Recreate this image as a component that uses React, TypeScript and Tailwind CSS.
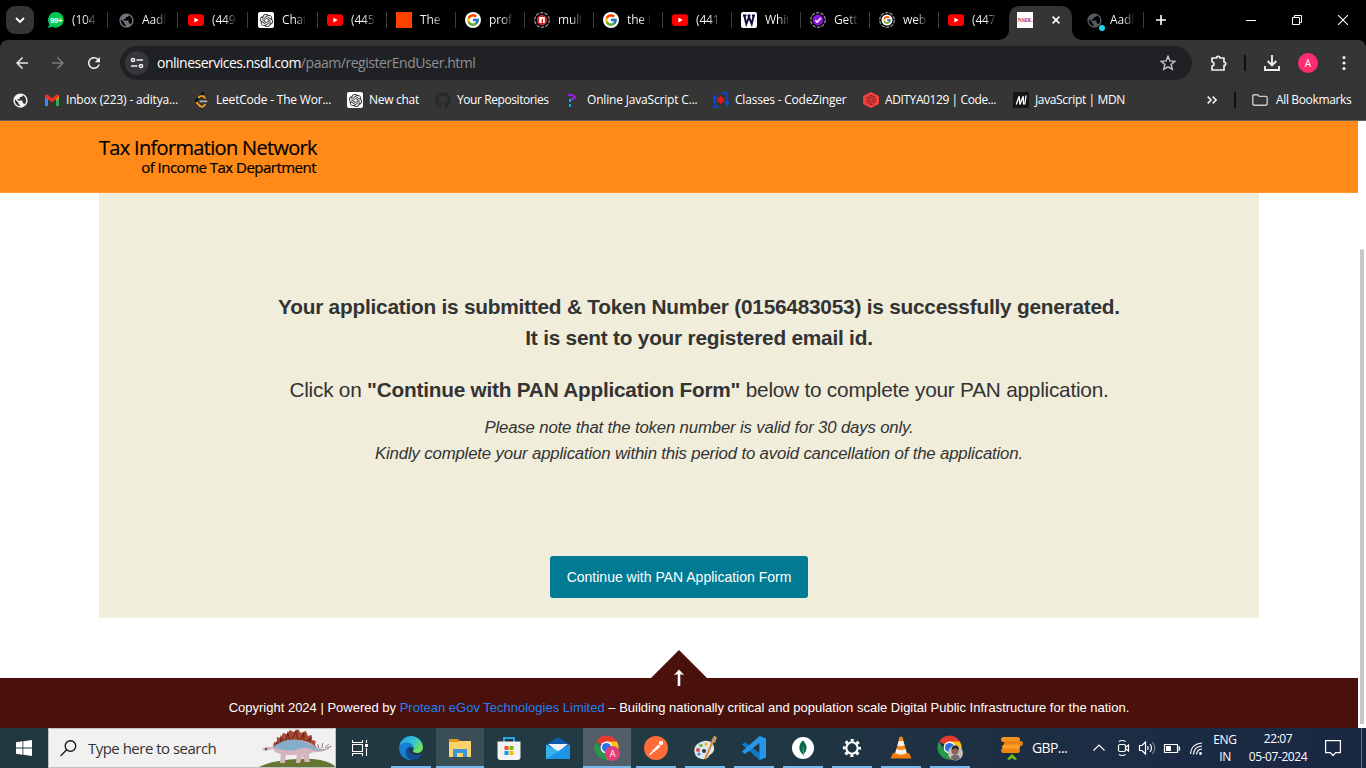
import type { ReactNode } from "react";
import { FcGoogle } from "react-icons/fc";
import { SiOpenai, SiMongodb } from "react-icons/si";
import { FaGithub } from "react-icons/fa";
import { MdPublic, MdArrowBack, MdArrowForward, MdRefresh } from "react-icons/md";

const YouTube = () => (
  <svg viewBox="0 0 16 16" className="size-4">
    <rect x="0" y="2.3" width="16" height="11.6" rx="2.8" fill="#f00" />
    <path d="M6.4 5.8 10.6 8.1 6.4 10.4z" fill="#fff" />
  </svg>
);

const OpenAi = () => (
  <span className="flex size-4 items-center justify-center rounded-[2px] bg-white">
    <SiOpenai size={13} color="#222" />
  </span>
);

const Globe = ({ color }: { color: string }) => <MdPublic size={17} color={color} className="-m-[0.5px] shrink-0" />;

const Ring = ({ children }: { children: ReactNode }) => (
  <svg viewBox="0 0 16 16" className="size-4">
    <circle cx="8" cy="8" r="7.3" fill="none" stroke="#8b8f94" strokeWidth="1.3" strokeDasharray="3.4 1.2" />
    {children}
  </svg>
);

const Whatsapp = () => (
  <svg viewBox="0 0 16 16" className="size-4">
    <path d="M8.2 0a7.8 7.8 0 1 1-3.7 14.8L0 16l1.3-4A7.8 7.8 0 0 1 8.2 0z" fill="#00c853" />
    <text x="8.2" y="11" textAnchor="middle" fontSize="8" letterSpacing="-0.4" fontWeight="700" fill="#fff" fontFamily="Liberation Sans, sans-serif">99+</text>
  </svg>
);

const GoogleSmall = () => (
  <span className="flex size-4 items-center justify-center rounded-full bg-white">
    <FcGoogle size={14} />
  </span>
);

const tabs: { icon: ReactNode; text: string }[] = [
  { icon: <Whatsapp />, text: "(104)" },
  { icon: <Globe color="#6f757b" />, text: "Aadhaar" },
  { icon: <YouTube />, text: "(449)" },
  { icon: <OpenAi />, text: "ChatGPT" },
  { icon: <YouTube />, text: "(445)" },
  { icon: <span className="block size-4 bg-[#ff4100]" />, text: "The" },
  { icon: <GoogleSmall />, text: "profile" },
  {
    icon: (
      <Ring>
        <circle cx="8" cy="8" r="5.3" fill="#cb2027" />
        <path d="M5.2 5h5.6v6H9V6.8H7.700V11H5.200z" fill="#fff" />
      </Ring>
    ),
    text: "multer",
  },
  { icon: <GoogleSmall />, text: "the f" },
  { icon: <YouTube />, text: "(441)" },
  {
    icon: (
      <svg viewBox="0 0 16 16" className="size-4">
        <rect width="16" height="16" rx="2" fill="#fff" />
        <path d="M2 3.500h3.400M6.500 3.500h3M11 3.500h3M3.400 4 5.300 12 8 5l2.700 7 1.900-8" fill="none" stroke="#100b40" strokeWidth="2" />
      </svg>
    ),
    text: "White",
  },
  {
    icon: (
      <Ring>
        <circle cx="8" cy="8" r="5.400" fill="#8418d8" />
        <path d="m5.300 8.200 1.900 1.900 3.600-4" fill="none" stroke="#fff" strokeWidth="1.500" />
      </Ring>
    ),
    text: "Getting",
  },
  {
    icon: (
      <Ring>
        <circle cx="8" cy="8" r="5.500" fill="#fff" />
        <FcGoogle x="3.500" y="3.500" size={9} />
      </Ring>
    ),
    text: "web d",
  },
  { icon: <YouTube />, text: "(447)" },
];

const Tab = ({ icon, text, last, wide }: { icon: ReactNode; text: string; last?: boolean; wide?: boolean }) => (
  <div className={`flex h-8 shrink-0 items-center ${wide ? "w-[70px]" : "w-[69px]"}`}>
    <span className="flex size-4 shrink-0 items-center justify-center">{icon}</span>
    <span className="ml-2 w-[23px] overflow-hidden whitespace-nowrap bg-[linear-gradient(90deg,#fff_13px,#0000_25px)] bg-clip-text text-xs tracking-[-0.15px] text-transparent">
      {text}
    </span>
    {!last && <span className="ml-[12px] h-4 w-px bg-[#3d3d3d]" />}
  </div>
);

const TabStrip = () => (
  <div className="flex h-10 bg-black">
    <div className="mt-[6px] ml-[6px] flex h-7 w-7 items-center justify-center rounded-[9px] bg-[#353535]">
      <svg width="10" height="7" viewBox="0 0 10 7">
        <path d="m1 1 4 4 4-4" fill="none" stroke="#fff" strokeWidth="1.800" />
      </svg>
    </div>
    <div className="mt-1 ml-[14px] flex w-[961px]">
      {tabs.map((t, i) => (
        <Tab key={i} icon={t.icon} text={t.text} wide={i < 3} last={i === tabs.length - 1} />
      ))}
    </div>
    <div className="relative mt-[6px] flex h-[34px] w-[63px] items-start rounded-t-[10px] bg-[#353535] pt-[6px] pl-2">
      <svg className="absolute bottom-0 -left-[10px]" width="10" height="10">
        <path d="M10 0v10H0A10 10 0 0 0 10 0z" fill="#353535" />
      </svg>
      <svg className="absolute -right-[10px] bottom-0" width="10" height="10">
        <path d="M0 0v10h10A10 10 0 0 1 0 0z" fill="#353535" />
      </svg>
      <span className="flex size-4 items-center justify-center bg-white pb-px font-['Liberation_Serif',serif] text-[6px] leading-none font-bold tracking-[-0.3px] text-[#c2283b]">NSDL</span>
      <svg className="mt-1 ml-[19px]" width="8" height="8" viewBox="0 0 8 8">
        <path d="m.6.6 6.800 6.800M7.400.6.6 7.400" stroke="#fff" strokeWidth="1.600" />
      </svg>
    </div>
    <div className="relative mt-1 ml-[14px] flex h-8">
      <Tab icon={<Globe color="#565c62" />} text="Aadhaar" last />
      <span className="absolute top-[21px] left-[13px] size-[6px] rounded-full bg-[#22d3ee]" />
    </div>
    <div className="-ml-[12px] mt-3 h-4 w-px bg-[#3d3d3d]" />
    <svg className="mt-[15px] ml-[12px]" width="10" height="10">
      <path d="M5 0v10M0 5h10" stroke="#fff" strokeWidth="1.600" />
    </svg>
    <div className="mt-[15px] flex pl-[80px]">
      <svg width="10" height="10">
        <path d="M0 5.500h10" stroke="#fff" />
      </svg>
      <svg className="ml-9" width="10" height="10">
        <path d="M.5 2.500h7v7h-7zM2.500 2.500v-2h7v7h-2" fill="none" stroke="#fff" />
      </svg>
      <svg className="ml-9" width="10" height="10">
        <path d="m0 0 10 10M10 0 0 10" stroke="#fff" strokeWidth="1.100" />
      </svg>
    </div>
  </div>
);

const Toolbar = () => (
  <div className="flex h-[46px] items-center rounded-t-[8px] bg-[#353535]">
    <MdArrowBack size={18} color="#e8e8e8" className="ml-[13px]" />
    <MdArrowForward size={18} color="#7c7c7c" className="ml-[18px]" />
    <MdRefresh size={18} color="#f1f1f1" className="ml-[18px]" />
    <div className="ml-[17px] flex h-[34px] w-[1072px] items-center rounded-full bg-[#202124]">
      <span className="ml-[5px] flex size-6 items-center justify-center rounded-full bg-[#353639]">
        <svg width="14" height="12" viewBox="0 0 14 12" fill="none" stroke="#f0f0f0" strokeWidth="1.500">
          <circle cx="3" cy="3" r="1.600" />
          <path d="M6.500 3H13M1 9h6.500" />
          <circle cx="11" cy="9" r="1.600" />
        </svg>
      </span>
      <span className="ml-2 flex-1 text-sm tracking-[-0.46px] text-[#8e9094]">
        <span className="tracking-[-0.5px] text-white">onlineservices.nsdl.com</span>/paam/registerEndUser.html
      </span>
      <svg className="mr-4" width="16" height="16" viewBox="0 0 16 16">
        <path d="m8 1.300 1.900 4.600 5 .4-3.800 3.200 1.200 4.900L8 11.800l-4.300 2.600 1.200-4.900L1.100 6.300l5-.4z" fill="none" stroke="#c7c7c7" strokeWidth="1.400" />
      </svg>
    </div>
    <svg className="ml-[18px]" width="18" height="18" viewBox="0 0 18 18">
      <path d="M2 4h4.500a1.700 1.700 0 0 1 3.400 0H14v4a1.700 1.700 0 0 1 0 3.400V16H2v-3.800c2.800-.6 2.800-3.800 0-4.400z" fill="none" stroke="#eee" strokeWidth="1.700" strokeLinejoin="round" />
    </svg>
    <span className="ml-4 h-4 w-[2px] bg-[#101010]" />
    <svg className="ml-[18px]" width="16" height="16" viewBox="0 0 16 16">
      <path d="M8 0v10M3.700 6 8 10.300 12.300 6M1 11v4h14v-4" fill="none" stroke="#eee" strokeWidth="1.900" />
    </svg>
    <span className="ml-[18px] flex size-5 items-center justify-center rounded-full bg-[#ff2d6f] text-[10px] text-white">A</span>
    <svg className="ml-6" width="4" height="16">
      <circle cx="2" cy="2.500" r="1.600" fill="#eee" />
      <circle cx="2" cy="8" r="1.600" fill="#eee" />
      <circle cx="2" cy="13.500" r="1.600" fill="#eee" />
    </svg>
  </div>
);

const Gmail = () => (
  <svg viewBox="0 0 16 16" className="size-4">
    <path d="M1 4v10h3V7z" fill="#4285f4" />
    <path d="M15 4v10h-3V7z" fill="#34a853" />
    <path d="M12 3.400 15 3.800V6l-3 2.500z" fill="#fbbc04" />
    <path d="M1 3.800C1 2.500 2.500 2 3.600 2.800L8 6.200l4.400-3.400c1-.8 2.600-.3 2.600 1l-1 2L8 10.200 1 5.500z" fill="#ea3323" />
  </svg>
);

const LeetCode = () => (
  <svg viewBox="0 0 16 16" className="size-4" fill="none" strokeWidth="1.800" strokeLinecap="round">
    <path d="M9.200.9 2.700 7.500q-1.200 1.500 0 3" stroke="#050505" />
    <path d="M4.700 5.500 6 4.300q1.800-1 3.300 0l1.600 1.500M2.700 10.600l3.200 3.500q2 1.300 3.700 0l1.500-1.500" stroke="#f89f1b" />
    <path d="M6.300 9.300h6.300" stroke="#b3b3b3" />
  </svg>
);

const bookmarks: { icon: ReactNode; text: string; cls: string }[] = [
  { icon: <Gmail />, text: "Inbox (223) - aditya...", cls: "w-[112px] tracking-[-0.17px]" },
  { icon: <LeetCode />, text: "LeetCode - The Wor...", cls: "w-[115px] tracking-[-0.2px]" },
  { icon: <OpenAi />, text: "New chat", cls: "w-[50px] tracking-[-0.28px]" },
  { icon: <FaGithub size={16} color="#24292e" />, text: "Your Repositories", cls: "w-[92px] tracking-[-0.42px]" },
  {
    icon: (
      <svg viewBox="0 0 16 16" className="size-4" fill="none" strokeWidth="2">
        <path d="M3 3h4.500l2.500 2.500L6 8" stroke="#9b20e8" />
        <path d="M5 7v3M5 12v3" stroke="#19a3f5" />
      </svg>
    ),
    text: "Online JavaScript C...",
    cls: "w-[110px] tracking-[-0.18px]",
  },
  {
    icon: (
      <svg viewBox="0 0 16 16" className="size-4" fill="none">
        <path d="M6 15H1.800V5M0 7l1.800-3L3.600 7M9 1.200h5V12M12.200 10 14 13l1.800-3" stroke="#0c47d8" strokeWidth="1.700" />
        <path d="M7.800 4v8M4.300 6l7 4M11.300 6l-7 4" stroke="#f01818" strokeWidth="1.700" />
      </svg>
    ),
    text: "Classes - CodeZinger",
    cls: "w-[112px] tracking-[-0.2px]",
  },
  {
    icon: (
      <svg viewBox="0 0 16 16" className="size-4">
        <path d="m8 0 7 3.500c.6.300.9.700.9 1.300v6.400c0 .6-.3 1-.9 1.300L8 16l-7-3.500c-.6-.3-.9-.7-.9-1.300V4.800c0-.6.300-1 .9-1.300z" fill="#f5423f" />
        <SiOpenai x="3" y="3" size={10} color="#7e1d20" />
      </svg>
    ),
    text: "ADITYA0129 | Code...",
    cls: "w-[112px] tracking-[-0.41px]",
  },
  {
    icon: (
      <svg viewBox="0 0 16 16" className="size-4">
        <rect width="16" height="16" fill="#15141a" />
        <path d="M3.200 12.500 6.200 4.200l.7 8.300L10.200 4.200l.4 8.300M13 3.500l-1.200 9" stroke="#fff" strokeWidth="1.300" fill="none" />
      </svg>
    ),
    text: "JavaScript | MDN",
    cls: "w-[90px] tracking-[-0.36px]",
  },
];

const Bookmarks = () => (
  <div className="flex h-[35px] items-center border-b border-[#66615f] bg-[#353535] pb-[6px] text-xs tracking-[-0.36px] whitespace-nowrap text-white">
    <span className="ml-3 w-4">
      <Globe color="#f4f4f4" />
    </span>
    <div className="ml-4 flex gap-4">
      {bookmarks.map((b) => (
        <div key={b.text} className="flex items-center gap-[6px]">
          <span className="size-4 shrink-0">{b.icon}</span>
          <span className={b.cls}>{b.text}</span>
        </div>
      ))}
    </div>
    <svg className="ml-[82px]" width="10" height="8" viewBox="0 0 10 8">
      <path d="m.7.6 3.400 3.400L.7 7.400M5.700.6l3.400 3.400-3.400 3.400" fill="none" stroke="#eee" strokeWidth="1.600" />
    </svg>
    <span className="ml-[17px] h-4 w-[2px] bg-[#101010]" />
    <svg className="ml-4" width="16" height="12" viewBox="0 0 16 12">
      <path d="M.8 2q0-1.200 1.200-1.200h3.700l1.500 1.600h6.600q1.400 0 1.400 1.200v6.200q0 1.400-1.400 1.400H2.200Q.8 11.200.8 9.800z" fill="none" stroke="#c8c8c8" strokeWidth="1.400" />
    </svg>
    <span className="ml-2">All Bookmarks</span>
  </div>
);

const Page = () => (
  <div className="flex h-[607px] bg-white font-['Liberation_Sans',sans-serif]">
    <main className="flex w-[1358px] flex-col">
      <header className="h-[72px] border-b border-[#ff972e] bg-[#ff8a17] pl-[99px] font-['Open_Sans','Noto_Sans',sans-serif] text-black">
        <div className="w-[217px] pt-[14px] text-right whitespace-nowrap">
          <div className="text-[20px] leading-[25px] tracking-[-0.68px] [-webkit-text-stroke:0.2px_black]">Tax Information Network</div>
          <div className="text-[15px] leading-[15px] tracking-[-0.52px] [-webkit-text-stroke:0.2px_black]">of Income Tax Department</div>
        </div>
      </header>
      <section className="ml-[99px] flex h-[425px] w-[1160px] flex-col items-center bg-[#f0eddb] text-[#333]">
        <div className="w-full pt-[98px] pl-10 text-center">
          <p className="text-[20.8px] leading-[31px] font-bold tracking-[-0.22px]">
            Your application is submitted &amp; Token Number (0156483053) is successfully generated.
            <br />
            It is sent to your registered email id.
          </p>
          <p className="mt-[21px] text-[20.8px] leading-[31px] tracking-[-0.23px]">
            Click on <b>"Continue with PAN Application Form"</b> below to complete your PAN application.
          </p>
          <p className="mt-[10px] text-[16.8px] leading-[26px] tracking-[-0.165px] italic">
            Please note that the token number is valid for 30 days only.
            <br />
            Kindly complete your application within this period to avoid cancellation of the application.
          </p>
        </div>
        <button className="mt-[89px] h-[42px] w-[258px] rounded-[3px] bg-[#007b93] text-sm text-white">Continue with PAN Application Form</button>
      </section>
      <div className="flex h-[60px] items-end justify-center">
        <div className="relative">
          <svg className="block" width="56" height="28">
            <path d="M28 0 56 28H0z" fill="#4a110c" />
          </svg>
          <svg className="absolute top-[19px] left-[22px]" width="12" height="18">
            <path d="M6 17V3" fill="none" stroke="#fff" strokeWidth="2.600" />
            <path d="M.8 6.300 6 .6l5.200 5.700L6 4.800z" fill="#fff" />
          </svg>
        </div>
      </div>
      <footer className="h-[50px] bg-[#4a110c] text-center text-[13px] leading-[59px] whitespace-nowrap text-white">
        Copyright 2024 | Powered by <span className="text-[#1e80f0]">Protean eGov Technologies Limited</span> – Building nationally critical and population scale Digital Public Infrastructure for the nation.
      </footer>
    </main>
    <div className="flex-1 pt-32 pl-[2px]">
      <div className="h-[475px] w-1 rounded-t-[2px] bg-[#c6c6c6]" />
    </div>
  </div>
);

const Dino = () => (
  <svg width="76" height="38" viewBox="0 0 76 38">
    <path d="M0 38Q14 31 40 30t36 7v1z" fill="#657633" />
    <path d="m14 18 1-5 3 1 0-6 4 1 2-5 4 1 3-4 4 2 4-3 3 4 5-2 2 5 4-1 0 5 4 1-1 4 4 4z" fill="#a94a33" />
    <path d="m17 17 1-4 3 4 1-9 4 8 3-12 3 10 5-12 3 12 5-10 0 10 7-5-2 6" fill="none" stroke="#6b281f" strokeWidth="1.200" />
    <path d="M3 21q2-4 9-3l5 0Q27 9 40 11q11 1 17 7 7 3 15 1-6 4-14 4-5 0-8 2l1 8h-5l-2-6-3 7h-4l1-8H27l-1 8h-5l1-9q-6-1-8-5l-7 2q-5 0-4-3z" fill="#d5b5bd" />
    <path d="M14 18q14-11 29-6 9 2 15 8 7 1 13-1-8 4-16 2-9-4-15-1-12 4-26-2z" fill="#83adc8" />
    <path d="m60 19-1-4m4 4 1-5m2 5 4-4m-2 4 5-2" stroke="#8b7479" />
    <circle cx="7" cy="20" r="1" fill="#302533" />
  </svg>
);

const ChromeIcon = ({ children }: { children?: ReactNode }) => (
  <svg viewBox="0 0 26 26" className="size-[26px]">
    <path d="M12.500 12.500 2.100 6.500a12 12 0 0 1 20.800 0z" fill="#e33b2e" />
    <path d="M12.500 12.500V6.500h10.400a12 12 0 0 1-10.400 18z" fill="#fbc116" />
    <path d="M12.500 12.500 17.700 15.500 12.500 24.500A12 12 0 0 1 2.100 6.500l5.200 9z" fill="#279847" />
    <circle cx="12.500" cy="12.500" r="5.900" fill="#fff" />
    <circle cx="12.500" cy="12.500" r="4.600" fill="#2b70e4" />
    {children}
  </svg>
);

const apps: { icon: ReactNode; bar?: string; tile?: string }[] = [
  {
    icon: (
      <svg viewBox="0 0 24 24" className="size-6">
        <defs>
          <linearGradient id="edgeTop" x1="0" x2="1" y1="0" y2=".5">
            <stop stopColor="#1c9be0" />
            <stop offset=".6" stopColor="#35c4d8" />
            <stop offset="1" stopColor="#6de55b" />
          </linearGradient>
        </defs>
        <path d="M.2 10A12 12 0 0 1 24 11c0 4-3 6-6 6-3 0-4.500-1.200-4-2.400.8-1 .8-2 .5-3C13.800 9 11 7.600 8 7.600 4.500 7.600 2 8.500.2 10z" fill="url(#edgeTop)" />
        <path d="M0 12c0-3 3.500-5.500 8-5.500 4 0 6.500 2.500 6.500 5.500-4-2-6.500 0-6.500 4 0 4 3 7.500 6.500 7.800A12 12 0 0 1 0 12z" fill="#167fd6" />
        <path d="M9 11c-4.500 4-2.500 12 4 12.900 4 0 7.500-2 9.500-5 .3-.6-.2-.9-.8-.6-5 2-10 .5-11.500-3.500-.4-1.500 0-3 1-4z" fill="#124c93" />
      </svg>
    ),
    bar: "w-10",
  },
  {
    icon: (
      <svg viewBox="0 0 24 24" className="size-6">
        <path d="M1 3h9l2 2h10v5H1z" fill="#e29b16" />
        <path d="M1 6h9l2-1h11v16H1z" fill="#fbd36b" />
        <path d="M5 21v-8h14v8h-4v-4H9v4z" fill="#3e94d8" />
      </svg>
    ),
    bar: "w-12",
    tile: "bg-[#3b4f56]",
  },
  {
    icon: (
      <svg viewBox="0 0 24 24" className="size-6">
        <path d="M7 7V2h10v5" fill="none" stroke="#23a8e4" strokeWidth="2" />
        <path d="M.5 5.500h23V21q0 3-3 3h-17q-3 0-3-3z" fill="#f3f3f3" />
        <path d="M7.500 10h4v4h-4z" fill="#f25022" />
        <path d="M12.500 10h4v4h-4z" fill="#7fba00" />
        <path d="M7.500 15h4v4h-4z" fill="#00a4ef" />
        <path d="M12.500 15h4v4h-4z" fill="#ffb900" />
      </svg>
    ),
  },
  {
    icon: (
      <svg viewBox="0 0 24 24" className="size-6">
        <path d="M0 8.500 12 1l12 7.500L12 16z" fill="#0f59ab" />
        <path d="M2 8h20L12 16z" fill="#f4f4f4" />
        <path d="M0 8.500 12 15l12-6.500V23H0z" fill="#35b2f0" />
        <path d="M0 23 24 8.500V23z" fill="#1d95e6" />
      </svg>
    ),
  },
  {
    icon: (
      <ChromeIcon>
        <circle cx="18.500" cy="18.500" r="7.500" fill="#e63c78" />
        <text x="18.500" y="22" textAnchor="middle" fontSize="9" fill="#fff">A</text>
      </ChromeIcon>
    ),
    bar: "w-12",
    tile: "bg-[#505f68]",
  },
  {
    icon: (
      <svg viewBox="0 0 24 24" className="size-6">
        <circle cx="12" cy="12" r="12" fill="#ff6c37" />
        <path d="m5.500 19 5-5" stroke="#fff" strokeWidth="1.200" />
        <path d="m9 14.500 5.500-5.500 1.500 1.500-5.500 4.500z" fill="#fff" stroke="#fff" />
        <circle cx="17" cy="7" r="2.200" fill="#fff" />
      </svg>
    ),
    bar: "w-10",
  },
  {
    icon: (
      <svg viewBox="0 0 24 24" className="size-6">
        <path d="M11 5c7-1 11 4 10 9-1 4-4 4-5 6-2 4-8 4-12 1-4-4-5-13 7-16z" fill="#dbe8f2" />
        <circle cx="5" cy="14" r="2" fill="#e64b4b" />
        <circle cx="8" cy="9.500" r="1.800" fill="#7cb342" />
        <circle cx="13" cy="8" r="1.700" fill="#f4b92d" />
        <circle cx="6" cy="18" r="1.600" fill="#4b7fd0" />
        <circle cx="11" cy="15" r="2" fill="#263d4b" />
        <path d="m12 23 8-18" stroke="#e58a29" strokeWidth="2" />
        <path d="m18 5 3-5 3 1-2 6z" fill="#c39a6b" />
      </svg>
    ),
    bar: "w-10",
  },
  {
    icon: (
      <svg viewBox="0 0 24 24" className="size-6">
        <path d="M17.500 0 24 2.500v19L17.500 24 0 8.500 3 6l14.500 11z" fill="#0c79c6" />
        <path d="M17.500 0 24 2.500v19L17.500 24V7L3 18 0 15.500z" fill="#2796e6" />
      </svg>
    ),
    bar: "w-10",
  },
  {
    icon: (
      <span className="flex size-[22px] items-center justify-center rounded-full bg-white">
        <SiMongodb size={16} color="#07684a" />
      </span>
    ),
    bar: "w-10",
  },
  {
    icon: (
      <svg viewBox="0 0 20 20" className="size-5">
        <circle cx="10" cy="10" r="7.700" fill="none" stroke="#fff" strokeWidth="2.800" strokeDasharray="3.024 3.024" strokeDashoffset="1.510" />
        <circle cx="10" cy="10" r="5.700" fill="none" stroke="#fff" strokeWidth="2.100" />
      </svg>
    ),
    bar: "w-10",
  },
  {
    icon: (
      <svg viewBox="0 0 24 24" className="size-6">
        <path d="M4 17h16l2.500 5.500h-21z" fill="#f17b0a" />
        <path d="M10.500 1q1.500-1 3 0l4.500 17q-6 4-12 0z" fill="#f58a18" />
        <path d="m9.700 5 -1.300 4.500q3.600 1.500 7.200 0L14.300 5zM7.300 13l-1 4q5.700 3 11.400 0l-1-4q-4.700 2-9.400 0z" fill="#f1f1f1" />
      </svg>
    ),
    bar: "w-10",
  },
  {
    icon: (
      <ChromeIcon>
        <circle cx="18.500" cy="18" r="7.500" fill="#c9bfb8" />
        <circle cx="18" cy="16" r="3.600" fill="#8c6553" />
        <path d="M14.500 15q.5-5 4.500-4.500 3 .5 3 4.500l-4-2z" fill="#252326" />
        <path d="M13.500 23.500q1.500-4 5-4t4.500 4q-4.500 3.500-9.500 0z" fill="#706a70" />
      </ChromeIcon>
    ),
    bar: "w-10",
  },
];

const Taskbar = () => (
  <div className="flex h-10 bg-[linear-gradient(90deg,#21373f_0%,#223a43_50%,#1d2f43_72%,#1a2743_100%)] text-white">
    <div className="flex w-12 items-center justify-center">
      <svg width="16" height="16" viewBox="0 0 16 16" fill="#fff">
        <path d="M0 2.200 6.500 1.300V7.600H0zM7.300 1.200 16 0v7.600H7.300zM0 8.400h6.500v6.300L0 13.800zM7.300 8.400H16V16l-8.700-1.200z" />
      </svg>
    </div>
    <div className="flex h-10 w-72 items-center border border-[#bfc3c0] bg-[#f1f1f1]">
      <svg className="ml-[11px]" width="17" height="17" viewBox="0 0 17 17">
        <circle cx="10.500" cy="6" r="5.300" fill="none" stroke="#111" strokeWidth="1.300" />
        <path d="M6.700 9.800.5 16.200" stroke="#111" strokeWidth="1.300" />
      </svg>
      <span className="ml-[11px] w-[172px] text-[15px] tracking-[-0.51px] whitespace-nowrap text-[#333]">Type here to search</span>
      <Dino />
    </div>
    <svg className="mt-3 ml-4" width="17" height="16" viewBox="0 0 17 16" fill="none" stroke="#fff" strokeWidth="1.100">
      <path d="M.5 0v2.500h10V0M.5 16v-2.500h10V16M.5 4.500h10v7H.5zM14.500 0v3M14.500 8v8" />
      <path d="M13 4h3v3h-3z" fill="#fff" stroke="none" />
    </svg>
    <div className="ml-[18px] flex gap-px">
      {apps.map((a, i) => (
        <div key={i} className={`flex h-10 w-12 flex-col items-center justify-between ${a.tile ?? ""}`}>
          <span className="flex h-10 items-center justify-center">{a.icon}</span>
          <span className={`-mt-[2px] h-[2px] shrink-0 bg-[#76b9ed] ${a.bar ?? ""}`} />
        </div>
      ))}
    </div>
    <svg className="mt-[9px] ml-[26px]" width="24" height="24" viewBox="0 0 24 24">
      <rect x="1" y="0" width="19" height="5" rx="2.500" fill="#f7941d" />
      <rect x="4" y="4" width="19" height="5" rx="2.500" fill="#e98212" />
      <rect x="2" y="7.500" width="18" height="5" rx="2.500" fill="#ff9f29" />
      <rect x="1" y="11.500" width="19" height="4.500" rx="2.200" fill="#ed8511" />
      <path d="m7 22 5-5 5 5-2 1-3-2-3 2z" fill="#76bd1d" />
    </svg>
    <span className="ml-2 w-[61px] self-center text-sm tracking-[-0.6px]">GBP...</span>
    <div className="flex w-[112px] items-center">
      <svg width="112" height="20" viewBox="0 0 112 20" fill="none" stroke="#fff" strokeWidth="1.200">
        <path d="m.5 12.500 5.500-5.500 5.500 5.500" />
        <rect x="25.500" y="6.500" width="7" height="7" rx="1.500" />
        <path d="m33 9 2.500-2v6L33 11M26 3.500q3-2 6.500 0M26 16.500q3 2 6.500 0" />
        <path d="M46.500 7.500h2.500L52.500 4v12L49 12.500h-2.500zM54.500 8q1.500 2 0 4M57 6q3 4 0 8" />
        <path d="M59.500 4q4.500 6 0 12" stroke="#7b8794" />
        <path d="M71.500 6.500h13v8h-13zM85 9h1.500v3H85" />
        <path d="M73 8h5v5h-5z" fill="#fff" stroke="none" />
        <path d="M97.500 16Q98 6 109 5M100.500 16.500q.5-8 8.500-8.500M103.500 16.500q.5-5 5.500-5.500" />
        <circle cx="107.500" cy="15.500" r="1.400" fill="#fff" stroke="none" />
      </svg>
    </div>
    <div className="flex w-[40px] flex-col items-center pt-[3px] text-xs leading-[17px] tracking-[-0.35px]">
      <span>ENG</span>
      <span>IN</span>
    </div>
    <div className="flex w-[66px] flex-col items-center pt-[2px] text-xs leading-[18px] tracking-[-0.42px] whitespace-nowrap">
      <span>22:07</span>
      <span>05-07-2024</span>
    </div>
    <svg className="mt-3 ml-[14px]" width="16" height="17" viewBox="0 0 16 17">
      <path d="M.6.6h14.800v12h-4.700L8 15.500l-2.700-2.900H.6z" fill="none" stroke="#fff" strokeWidth="1.200" />
    </svg>
    <span className="ml-5 h-10 w-px bg-[#67717f]" />
  </div>
);

export default function App() {
  return (
    <div className="h-[768px] w-[1366px] overflow-hidden bg-black font-['Open_Sans','Noto_Sans',sans-serif]">
      <TabStrip />
      <Toolbar />
      <Bookmarks />
      <Page />
      <Taskbar />
    </div>
  );
}
